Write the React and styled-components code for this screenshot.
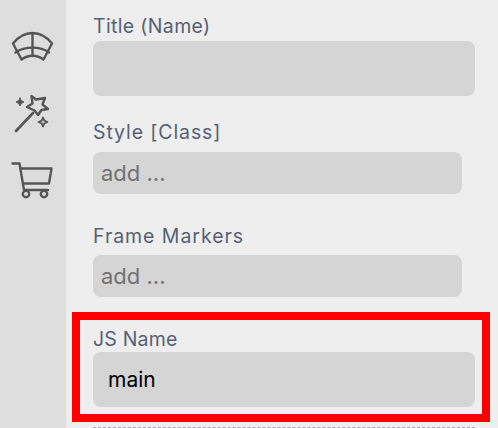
import React from "react";
import styled, { createGlobalStyle } from "styled-components";

const Global = createGlobalStyle`
  html, body { margin: 0; padding: 0; height: 100%; overflow: hidden; background: #eeeeee; }
  #root { height: 100%; }
`;

const Page = styled.div`
  position: relative;
  display: flex;
  width: 498px;
  height: 428px;
  overflow: hidden;
  font-family: Inter, "Liberation Sans", sans-serif;
  background: #eeeeee;
`;

const Sidebar = styled.nav`
  flex: 0 0 66px;
  background: #dedede;
  display: flex;
  flex-direction: column;
  align-items: center;
  padding-top: 26px;
  box-sizing: border-box;
  gap: 27px;
`;

const IconSlot = styled.div`
  width: 44px;
  height: 40px;
  color: #555555;
  svg { display: block; }
`;

const Panel = styled.main`
  flex: 1;
  padding: 14px 23px 0 27px;
  box-sizing: border-box;
`;

const Field = styled.section`
  margin-bottom: ${(p) => p.$after}px;
`;

const Label = styled.label`
  display: block;
  font-size: 19.5px;
  letter-spacing: ${(p) => p.$track || 0}px;
  line-height: 24px;
  height: 24px;
  margin-bottom: ${(p) => p.$gap}px;
  color: #566175;
`;

const InputBox = styled.div`
  width: ${(p) => p.$width}px;
  height: ${(p) => p.$height}px;
  box-sizing: border-box;
  padding-left: ${(p) => p.$inset}px;
  display: flex;
  align-items: center;
  background: #d5d5d5;
  border-radius: 8px;
  font-size: ${(p) => (p.$placeholder ? 22 : 21)}px;
  color: ${(p) => (p.$placeholder ? "#737373" : "#000000")};
`;

const Highlight = styled.div`
  position: absolute;
  left: 72px;
  top: 312px;
  width: 418px;
  height: 110px;
  box-sizing: border-box;
  border: 8px solid #ff0000;
  pointer-events: none;
`;

const Divider = styled.div`
  width: 382px;
  border-top: 1px dashed #a8a8a8;
  margin-top: 20px;
`;

const Icon = ({ y, children }) => (
  <svg width="44" height="40" viewBox={`11 ${y} 44 40`} fill="none" stroke="currentColor" strokeWidth="2.4" strokeLinejoin="round" strokeLinecap="round">
    {children}
  </svg>
);

const PanoIcon = () => (
  <Icon y={26}>
    <path d="M13 43.5C24 29.5 41 29.5 52 43.5L43.5 59.5C37 54.5 28 54.5 21.5 59.5Z" />
    <path d="M15.5 52.5C25 46 40 46 49 52.5" />
    <path d="M32.5 34V56" />
  </Icon>
);

const WandIcon = () => (
  <Icon y={93}>
    <path d="M16 131L33 113" strokeWidth="2.6" />
    <path d="M31.5 96L36 99.5L45 98L42.5 104.5L48 109L41.5 110L38 115L34.5 110.5L27 107L32.5 103.5Z" />
    <path d="M20 98L21.3 100.7L24 102L21.3 103.3L20 106L18.7 103.3L16 102L18.7 100.7Z" fill="currentColor" strokeWidth="1" />
    <path d="M43 117.5L44.3 120.7L47.5 122L44.3 123.3L43 126.5L41.7 123.3L38.5 122L41.7 120.7Z" strokeWidth="1.8" />
  </Icon>
);

const CartIcon = () => (
  <Icon y={160}>
    <path d="M12.5 163.5H19.5L24 190H48" />
    <path d="M20.5 168.5H51.5L49 183.5H23" />
    <circle cx="26" cy="194" r="3.2" />
    <circle cx="44" cy="194" r="3.2" />
  </Icon>
);

export default function App() {
  return (
    <Page>
      <Global />
      <Sidebar>
        <IconSlot><PanoIcon /></IconSlot>
        <IconSlot><WandIcon /></IconSlot>
        <IconSlot><CartIcon /></IconSlot>
      </Sidebar>
      <Panel>
        <Field $after={24}>
          <Label $gap={3} $track={0.35}>Title (Name)</Label>
          <InputBox $width={382} $height={55} />
        </Field>
        <Field $after={30}>
          <Label $gap={8} $track={0.9}>Style [Class]</Label>
          <InputBox $width={369} $height={42} $inset={8} $placeholder>add ...</InputBox>
        </Field>
        <Field $after={30}>
          <Label $gap={7} $track={0.95}>Frame Markers</Label>
          <InputBox $width={369} $height={42} $inset={8} $placeholder>add ...</InputBox>
        </Field>
        <Field $after={0}>
          <Label $gap={1} $track={0.2}>JS Name</Label>
          <InputBox $width={382} $height={55} $inset={15}>main</InputBox>
        </Field>
        <Divider />
      </Panel>
      <Highlight />
    </Page>
  );
}
